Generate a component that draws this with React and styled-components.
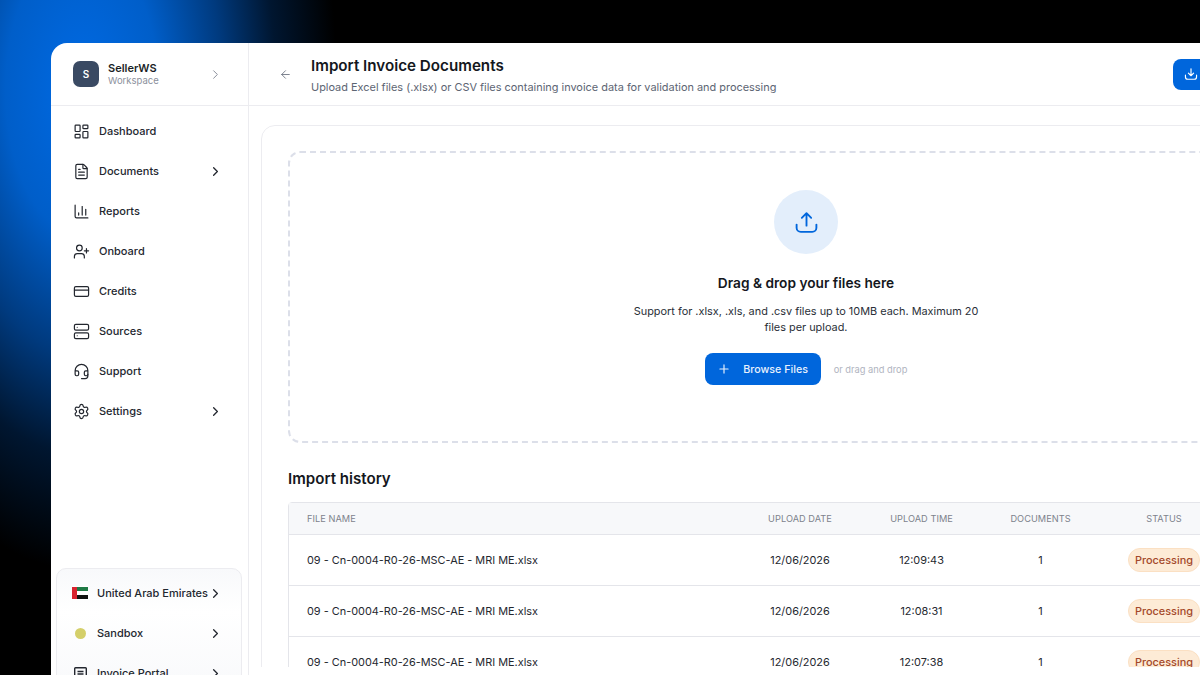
import styled, { createGlobalStyle } from 'styled-components'
import {
  ArrowLeft,
  ChartColumn,
  ChevronRight,
  CreditCard,
  FileText,
  Headset,
  LayoutDashboard,
  Plus,
  Server,
  Settings,
  UserPlus,
} from 'lucide-react'

const navItems = [
  { label: 'Dashboard', icon: LayoutDashboard },
  { label: 'Documents', icon: FileText, more: true },
  { label: 'Reports', icon: ChartColumn },
  { label: 'Onboard', icon: UserPlus },
  { label: 'Credits', icon: CreditCard },
  { label: 'Sources', icon: Server },
  { label: 'Support', icon: Headset },
  { label: 'Settings', icon: Settings, more: true },
]

const imports = [
  { time: '12:09:43' },
  { time: '12:08:31' },
  { time: '12:07:38' },
]

const FILE_NAME = '09 - Cn-0004-R0-26-MSC-AE - MRI ME.xlsx'

const TrayArrow = ({ size, down, weight = 2 }) => (
  <svg width={size} height={size} viewBox="0 0 24 24" fill="none" stroke="currentColor" strokeWidth={weight} strokeLinecap="round" strokeLinejoin="round">
    <path d="M2.5 14v3a4 4 0 0 0 4 4h11a4 4 0 0 0 4-4v-3" />
    {down ? <path d="M12 3v12M7.5 10.5 12 15l4.5-4.5" /> : <path d="M12 15V3M7.5 7.5 12 3l4.5 4.5" />}
  </svg>
)

const UaeFlag = () => (
  <svg width="16" height="14" viewBox="0 0 16 14">
    <rect width="16" height="14" fill="#fff" />
    <rect x="5" y="1" width="11" height="4" fill="#1f7a45" />
    <rect x="5" y="9" width="11" height="4" fill="#111" />
    <rect x="0" y="1" width="5" height="12" fill="#d8232f" />
  </svg>
)

const PortalIcon = () => (
  <svg width="15" height="15" viewBox="0 0 15 15" fill="none" stroke="currentColor" strokeWidth="1.4">
    <rect x="1.7" y="1.7" width="11.6" height="11.6" rx="0.8" />
    <path d="M4.5 5.5h6M4.5 8h6M4.5 10.5h3.5" />
  </svg>
)

const App = () => (
  <>
    <GlobalStyle />
    <Stage>
      <Window>
        <Sidebar>
          <Workspace>
            <Avatar>S</Avatar>
            <WorkspaceText>
              <WorkspaceName>SellerWS</WorkspaceName>
              <WorkspaceKind>Workspace</WorkspaceKind>
            </WorkspaceText>
            <ChevronRight size={15} color="#8b909c" strokeWidth={1.6} />
          </Workspace>
          <Nav>
            {navItems.map(({ label, icon: Icon, more }) => (
              <NavItem key={label}>
                <NavIcon>
                  <Icon size={17} strokeWidth={1.7} />
                </NavIcon>
                <NavLabel>{label}</NavLabel>
                {more && <ChevronRight size={15} strokeWidth={2.1} />}
              </NavItem>
            ))}
          </Nav>
          <Context>
            <ContextItem>
              <ContextIcon>
                <UaeFlag />
              </ContextIcon>
              <ContextLabel>United Arab Emirates</ContextLabel>
              <ChevronRight size={15} strokeWidth={2.1} />
            </ContextItem>
            <ContextItem>
              <ContextIcon>
                <EnvDot />
              </ContextIcon>
              <ContextLabel>Sandbox</ContextLabel>
              <ChevronRight size={15} strokeWidth={2.1} />
            </ContextItem>
            <ContextItem>
              <ContextIcon>
                <PortalIcon />
              </ContextIcon>
              <ContextLabel>Invoice Portal</ContextLabel>
              <ChevronRight size={15} strokeWidth={2.1} />
            </ContextItem>
          </Context>
        </Sidebar>

        <Main>
          <Header>
            <BackButton>
              <ArrowLeft size={13} strokeWidth={1.6} />
            </BackButton>
            <HeaderText>
              <Title>Import Invoice Documents</Title>
              <Subtitle>Upload Excel files (.xlsx) or CSV files containing invoice data for validation and processing</Subtitle>
            </HeaderText>
            <HeaderAction>
              <TrayArrow size={14} down />
            </HeaderAction>
          </Header>

          <Body>
            <Card>
              <Dropzone>
                <UploadCircle>
                  <TrayArrow size={25} weight={1.8} />
                </UploadCircle>
                <DropTitle>Drag &amp; drop your files here</DropTitle>
                <DropHint>Support for .xlsx, .xls, and .csv files up to 10MB each. Maximum 20 files per upload.</DropHint>
                <DropActions>
                  <BrowseButton>
                    <Plus size={14} strokeWidth={2} />
                    Browse Files
                  </BrowseButton>
                  <OrDrop>or drag and drop</OrDrop>
                </DropActions>
              </Dropzone>

              <SectionTitle>Import history</SectionTitle>
              <Table>
                <HeadRow>
                  <HeadCell $left>File name</HeadCell>
                  <HeadCell>Upload date</HeadCell>
                  <HeadCell>Upload time</HeadCell>
                  <HeadCell>Documents</HeadCell>
                  <HeadCell>Status</HeadCell>
                </HeadRow>
                {imports.map(({ time }) => (
                  <Row key={time}>
                    <Cell $left>{FILE_NAME}</Cell>
                    <Cell>12/06/2026</Cell>
                    <Cell>{time}</Cell>
                    <Cell>1</Cell>
                    <Cell>
                      <StatusPill>Processing</StatusPill>
                    </Cell>
                  </Row>
                ))}
              </Table>
            </Card>
          </Body>
        </Main>
      </Window>
    </Stage>
  </>
)

const GlobalStyle = createGlobalStyle`
  * {
    box-sizing: border-box;
  }

  html,
  body {
    margin: 0;
    height: 100%;
    overflow: hidden;
    background: #000;
  }

  body {
    font-family: Inter, "Liberation Sans", sans-serif;
    color: #1b1f27;
  }
`

const Stage = styled.div`
  width: 1200px;
  height: 675px;
  overflow: hidden;
  padding: 43px 0 0 51px;
  background: radial-gradient(ellipse 255px 480px at 82px 90px, #006ae4 0%, #005ec9 30%, #003a7e 55%, #001630 76%, #000 100%);
`

const Window = styled.div`
  display: flex;
  width: 1313px;
  height: 632px;
  overflow: hidden;
  background: #fff;
  border-radius: 16px 0 0 0;
`

const Sidebar = styled.aside`
  flex: 0 0 198px;
  min-width: 0;
  display: flex;
  flex-direction: column;
  border-right: 1px solid #ececf0;
`

const Workspace = styled.div`
  flex: 0 0 63px;
  display: flex;
  align-items: center;
  padding: 0 25px 0 22px;
  border-bottom: 1px solid #ececf0;
`

const Avatar = styled.div`
  flex: 0 0 26px;
  height: 26px;
  display: flex;
  align-items: center;
  justify-content: center;
  border-radius: 7px;
  background: #3a4a63;
  color: #fff;
  font-size: 10px;
  font-weight: 600;
`

const WorkspaceText = styled.div`
  flex: 1;
  margin-left: 9px;
`

const WorkspaceName = styled.div`
  font-size: 11px;
  font-weight: 600;
  line-height: 14px;
`

const WorkspaceKind = styled.div`
  font-size: 9.5px;
  line-height: 12px;
  color: #8b909c;
`

const Nav = styled.nav`
  flex: 0 0 462px;
  padding-top: 5px;
`

const NavItem = styled.div`
  height: 40px;
  display: flex;
  align-items: center;
  padding: 0 25px 0 22px;
  color: #23272f;
`

const NavIcon = styled.span`
  flex: 0 0 17px;
  display: flex;
  align-items: center;
  justify-content: center;
`

const NavLabel = styled.span`
  flex: 1;
  margin-left: 9px;
  font-size: 11px;
  font-weight: 500;
`

const Context = styled.div`
  margin: 0 6px 0 5px;
  border: 1px solid #ececf0;
  border-radius: 10px;
  padding-top: 4px;
  height: 125px;
  flex: none;
  background: linear-gradient(#f8f9fb, #fff 35%, #f8f9fb);
`

const ContextItem = styled.div`
  height: 40px;
  display: flex;
  align-items: center;
  padding: 0 18px 0 15px;
  color: #23272f;
`

const ContextIcon = styled.span`
  flex: 0 0 16px;
  display: flex;
  align-items: center;
  justify-content: center;
`

const ContextLabel = styled.span`
  flex: 1;
  margin-left: 9px;
  font-size: 11px;
  font-weight: 500;
  white-space: nowrap;
`

const EnvDot = styled.span`
  width: 11px;
  height: 11px;
  border-radius: 50%;
  background: #d4cf6a;
`

const Main = styled.main`
  flex: 1;
  min-width: 0;
  display: flex;
  flex-direction: column;
`

const Header = styled.header`
  flex: 0 0 63px;
  display: flex;
  align-items: center;
  padding: 0 13px 0 30px;
  border-bottom: 1px solid #ececf0;
`

const BackButton = styled.span`
  display: flex;
  width: 13px;
  color: #6b7280;
`

const HeaderText = styled.div`
  flex: 1;
  margin: 2px 0 0 19px;
`

const Title = styled.h1`
  margin: 0 0 4px;
  font-size: 15.2px;
  line-height: 20px;
  font-weight: 600;
  color: #14171d;
`

const Subtitle = styled.p`
  margin: 0;
  font-size: 10.93px;
  line-height: 15px;
  color: #5d6573;
`

const HeaderAction = styled.div`
  flex: 0 0 178px;
  height: 31px;
  display: flex;
  align-items: center;
  padding-left: 11px;
  border-radius: 8px;
  background: #0066dc;
  color: #fff;
`

const Body = styled.div`
  height: 561px;
  overflow: hidden;
  padding: 19px 13px 0 12px;
`

const Card = styled.section`
  border: 1px solid #ececf0;
  border-radius: 14px;
  padding: 25px 26px;
`

const Dropzone = styled.div`
  height: 292px;
  display: flex;
  flex-direction: column;
  align-items: center;
  padding-top: 37px;
  border: 2px dashed #dcdfe9;
  border-radius: 12px;
`

const UploadCircle = styled.div`
  width: 64px;
  height: 64px;
  display: flex;
  align-items: center;
  justify-content: center;
  border-radius: 50%;
  background: #e3eefb;
  color: #0066dc;
`

const DropTitle = styled.div`
  margin-top: 20px;
  font-size: 13.7px;
  line-height: 18px;
  font-weight: 600;
  color: #14171d;
`

const DropHint = styled.p`
  width: 360px;
  margin: 11px 0 0;
  font-size: 10.9px;
  line-height: 16px;
  text-align: center;
  color: #2a2f38;
`

const DropActions = styled.div`
  display: flex;
  align-items: center;
  gap: 13px;
  margin-top: 18px;
`

const BrowseButton = styled.div`
  width: 116px;
  height: 32px;
  display: flex;
  align-items: center;
  justify-content: center;
  gap: 12px;
  border-radius: 8px;
  background: #0066dc;
  color: #e8f1fd;
  font-size: 10.7px;
  font-weight: 500;
`

const OrDrop = styled.span`
  font-size: 9.3px;
  color: #b0b4c0;
`

const SectionTitle = styled.h2`
  margin: 26px 0 13px;
  font-size: 15.1px;
  line-height: 20px;
  font-weight: 600;
  color: #14171d;
`

const Table = styled.div`
  border: 1px solid #e4e5ea;
  border-radius: 4px 4px 0 0;
`

const columns = '450px 122px 121px 117px 130px 1fr'

const HeadRow = styled.div`
  height: 32px;
  display: grid;
  grid-template-columns: ${columns};
  align-items: center;
  background: #f7f8fa;
  border-bottom: 1px solid #e4e5ea;
`

const HeadCell = styled.div`
  padding-left: ${p => (p.$left ? '18px' : '0')};
  text-align: ${p => (p.$left ? 'left' : 'center')};
  font-size: 9.2px;
  letter-spacing: 0.05px;
  text-transform: uppercase;
  color: #7d828c;
`

const Row = styled.div`
  height: 51px;
  display: grid;
  grid-template-columns: ${columns};
  align-items: center;
  border-bottom: 1px solid #e4e5ea;
`

const Cell = styled.div`
  padding-left: ${p => (p.$left ? '18px' : '0')};
  text-align: ${p => (p.$left ? 'left' : 'center')};
  font-size: 10.9px;
  color: #25282f;
`

const StatusPill = styled.span`
  display: inline-flex;
  align-items: center;
  justify-content: center;
  width: 72px;
  height: 24px;
  border: 1px solid #fbe0c3;
  border-radius: 12px;
  background: #fdebd6;
  color: #a4492a;
  font-size: 10.9px;
  font-weight: 500;
`

export default App
